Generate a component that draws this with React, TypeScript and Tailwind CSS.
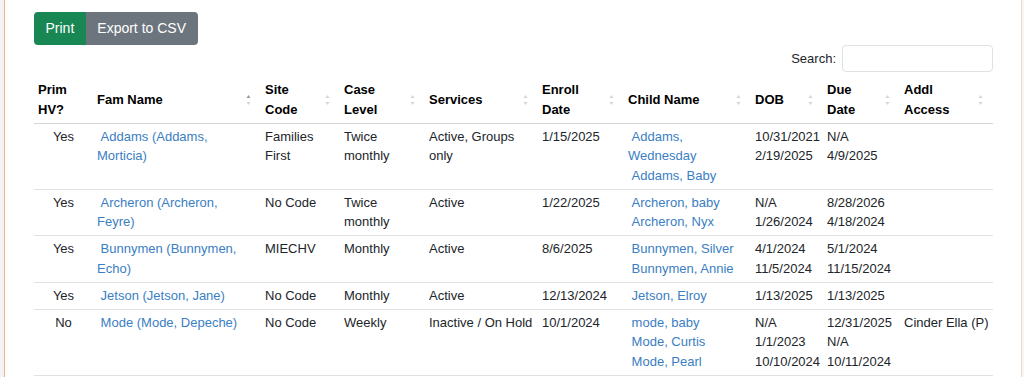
import React from "react";

type Row = {
  prim: string;
  fam: string;
  site: string;
  level: string;
  services: string;
  enroll: string;
  children: string[];
  dob: string[];
  due: string[];
  addl: string;
};

const rows: Row[] = [
  {
    prim: "Yes",
    fam: "Addams (Addams, Morticia)",
    site: "Families First",
    level: "Twice monthly",
    services: "Active, Groups only",
    enroll: "1/15/2025",
    children: ["Addams, Wednesday", "Addams, Baby"],
    dob: ["10/31/2021", "2/19/2025"],
    due: ["N/A", "4/9/2025"],
    addl: "",
  },
  {
    prim: "Yes",
    fam: "Archeron (Archeron, Feyre)",
    site: "No Code",
    level: "Twice monthly",
    services: "Active",
    enroll: "1/22/2025",
    children: ["Archeron, baby", "Archeron, Nyx"],
    dob: ["N/A", "1/26/2024"],
    due: ["8/28/2026", "4/18/2024"],
    addl: "",
  },
  {
    prim: "Yes",
    fam: "Bunnymen (Bunnymen, Echo)",
    site: "MIECHV",
    level: "Monthly",
    services: "Active",
    enroll: "8/6/2025",
    children: ["Bunnymen, Silver", "Bunnymen, Annie"],
    dob: ["4/1/2024", "11/5/2024"],
    due: ["5/1/2024", "11/15/2024"],
    addl: "",
  },
  {
    prim: "Yes",
    fam: "Jetson (Jetson, Jane)",
    site: "No Code",
    level: "Monthly",
    services: "Active",
    enroll: "12/13/2024",
    children: ["Jetson, Elroy"],
    dob: ["1/13/2025"],
    due: ["1/13/2025"],
    addl: "",
  },
  {
    prim: "No",
    fam: "Mode (Mode, Depeche)",
    site: "No Code",
    level: "Weekly",
    services: "Inactive / On Hold",
    enroll: "10/1/2024",
    children: ["mode, baby", "Mode, Curtis", "Mode, Pearl"],
    dob: ["N/A", "1/1/2023", "10/10/2024"],
    due: ["12/31/2025", "N/A", "10/11/2024"],
    addl: "Cinder Ella (P)",
  },
];

function SortIcon({ active }: { active?: boolean }) {
  return (
    <svg
      className="absolute right-[10px] top-1/2 -translate-y-1/2"
      width="5"
      height="11"
      viewBox="0 0 5 11"
    >
      <polygon points="0.5,3.5 2.5,0.5 4.5,3.5" fill={active ? "#9a9a9a" : "#d6d6d6"} />
      <polygon points="0.5,7.5 2.5,10.5 4.5,7.5" fill="#d6d6d6" />
    </svg>
  );
}

const headers: { label: string; w: string; sort: boolean; active?: boolean }[] = [
  { label: "Prim HV?", w: "w-[59px]", sort: false },
  { label: "Fam Name", w: "w-[168px]", sort: true, active: true },
  { label: "Site Code", w: "w-[79px]", sort: true },
  { label: "Case Level", w: "w-[85px]", sort: true },
  { label: "Services", w: "w-[113px]", sort: true },
  { label: "Enroll Date", w: "w-[86px]", sort: true },
  { label: "Child Name", w: "w-[127px]", sort: true },
  { label: "DOB", w: "w-[72px]", sort: true },
  { label: "Due Date", w: "w-[77px]", sort: true },
  { label: "Addl Access", w: "w-[93px]", sort: true },
];

const td = "px-[4px] py-[3.25px] align-top border-b border-[#dee2e6]";

export default function App() {
  return (
    <div
      className="flex w-[1024px] h-[377px] overflow-hidden bg-white text-[#212529]"
      style={{ fontFamily: '"Liberation Sans", Arial, sans-serif' }}
    >
      <div className="w-[4px] shrink-0 bg-[#f3f3f3]" />
      <div className="w-[1px] shrink-0 bg-[#f1b182]" />
      <div className="flex-1 pl-[29px] pr-[28px] pt-[12px]">
        <div className="flex">
          <div className="flex h-[33px] overflow-hidden rounded-[4px] text-[14px] text-white">
            <div className="flex items-center bg-[#198754] px-[11.5px]">Print</div>
            <div className="flex items-center bg-[#6c757d] px-[11.5px]">Export to CSV</div>
          </div>
        </div>
        <div className="flex items-center justify-end gap-[6px] text-[13px]">
          <span>Search:</span>
          <div className="h-[27px] w-[151px] rounded-[4px] border border-[#dee2e6] bg-white" />
        </div>
        <table className="mt-[5px] w-[959px] table-fixed border-collapse text-[13px] leading-[19.5px]">
          <thead>
            <tr>
              {headers.map((h) => (
                <th
                  key={h.label}
                  className={`${h.w} relative border-b border-[#d4d7da] py-[3.25px] pl-[4px] text-left align-middle font-bold text-black ${
                    h.sort ? "pr-[30px]" : "pr-[4px]"
                  }`}
                >
                  {h.label}
                  {h.sort && <SortIcon active={h.active} />}
                </th>
              ))}
            </tr>
          </thead>
          <tbody>
            {rows.map((r) => (
              <tr key={r.fam}>
                <td className={`${td} text-center`}>{r.prim}</td>
                <td className={td}>
                  <span className="text-[#3a7ec3]">{"\u00a0" + r.fam}</span>
                </td>
                <td className={td}>{r.site}</td>
                <td className={td}>{r.level}</td>
                <td className={td}>{r.services}</td>
                <td className={td}>{r.enroll}</td>
                <td className={td}>
                  {r.children.map((c, i) => (
                    <div key={i} className="text-[#3a7ec3]">
                      {"\u00a0" + c}
                    </div>
                  ))}
                </td>
                <td className={td}>
                  {r.dob.map((d, i) => (
                    <div key={i}>{d}</div>
                  ))}
                </td>
                <td className={td}>
                  {r.due.map((d, i) => (
                    <div key={i}>{d}</div>
                  ))}
                </td>
                <td className={td}>{r.addl}</td>
              </tr>
            ))}
          </tbody>
        </table>
      </div>
      <div className="w-[1px] shrink-0 bg-[#f1d9c8]" />
      <div className="w-[2px] shrink-0 bg-[#f6f6f6]" />
    </div>
  );
}
